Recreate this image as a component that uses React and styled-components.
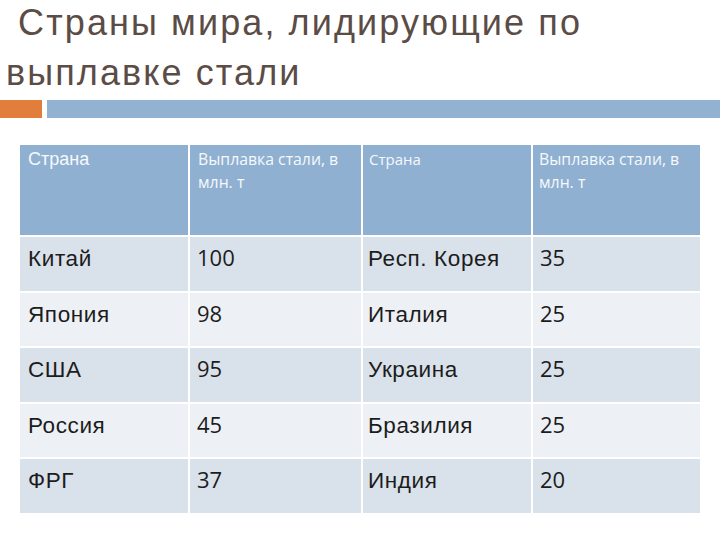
import React from "react";
import styled, { createGlobalStyle } from "styled-components";

const Global = createGlobalStyle`
  html, body { margin: 0; padding: 0; background: #ffffff; }
  body { width: 720px; height: 540px; overflow: hidden; }
`;

const Slide = styled.div`
  width: 720px;
  height: 540px;
  display: flex;
  flex-direction: column;
  background: #ffffff;
`;

const Title = styled.h1`
  margin: -2px 0 0 0;
  padding: 0 0 0 6px;
  height: 99px;
  font-family: "Liberation Sans", Arial, sans-serif;
  font-weight: normal;
  font-size: 36px;
  letter-spacing: 2.1px;
  line-height: 50px;
  color: #5b4c46;
  white-space: pre;
`;

const Bars = styled.div`
  display: flex;
  gap: 5px;
  height: 18px;
  margin-top: 3px;
`;

const Bar = styled.div`
  height: 100%;
  background: ${(p) => p.$color};
  ${(p) => (p.$width ? `width: ${p.$width}px; flex: none;` : "flex: 1;")}
`;

const Table = styled.div`
  display: grid;
  grid-template-columns: 168px 171px 168px 167px;
  grid-template-rows: 90px;
  grid-auto-rows: 53.6px;
  column-gap: 2px;
  row-gap: 2px;
  margin: 27px 0 0 20px;
  width: 680px;
`;

const HeadCell = styled.div`
  background: #8fb0d1;
  color: #f6f9fc;
  padding: ${(p) => (p.$wide ? "4px 8px 0 8px" : `3px 8px 0 ${p.$pad}px`)};
  font-family: ${(p) =>
    p.$wide ? `"Liberation Sans", Arial, sans-serif` : `"Open Sans", sans-serif`};
  font-size: ${(p) => (p.$wide ? "18px" : p.$small ? "15px" : "15.8px")};
  line-height: ${(p) => (p.$wide ? "normal" : "23px")};
`;

const Cell = styled.div`
  background: ${(p) => (p.$alt ? "#edf1f6" : "#d9e1ea")};
  color: #1c1c1c;
  padding: ${(p) => (p.$num ? "5px 8px 0 7px" : `9px 6px 0 ${p.$pad}px`)};
  font-family: ${(p) =>
    p.$num ? `"Open Sans", sans-serif` : `"Liberation Sans", Arial, sans-serif`};
  font-size: ${(p) => (p.$num ? "22px" : "22.5px")};
  line-height: normal;
  letter-spacing: ${(p) => (p.$num ? "0" : "0.6px")};
`;

const rows = [
  ["Китай", "100", "Респ. Корея", "35"],
  ["Япония", "98", "Италия", "25"],
  ["США", "95", "Украина", "25"],
  ["Россия", "45", "Бразилия", "25"],
  ["ФРГ", "37", "Индия", "20"],
];

export default function App() {
  return (
    <Slide>
      <Global />
      <Title>{" Страны мира, лидирующие по\nвыплавке стали"}</Title>
      <Bars>
        <Bar $color="#e27e3b" $width={42} />
        <Bar $color="#93b2d2" />
      </Bars>
      <Table>
        <HeadCell $wide>Страна</HeadCell>
        <HeadCell $pad={8}>Выплавка стали, в млн. т</HeadCell>
        <HeadCell $pad={6} $small>Страна</HeadCell>
        <HeadCell $pad={6}>Выплавка стали, в млн. т</HeadCell>
        {rows.map((r, i) =>
          r.map((v, j) => (
            <Cell
              key={`${i}-${j}`}
              $alt={i % 2 === 1}
              $num={j % 2 === 1}
              $pad={j === 0 ? 8 : 5}
            >
              {v}
            </Cell>
          ))
        )}
      </Table>
    </Slide>
  );
}
